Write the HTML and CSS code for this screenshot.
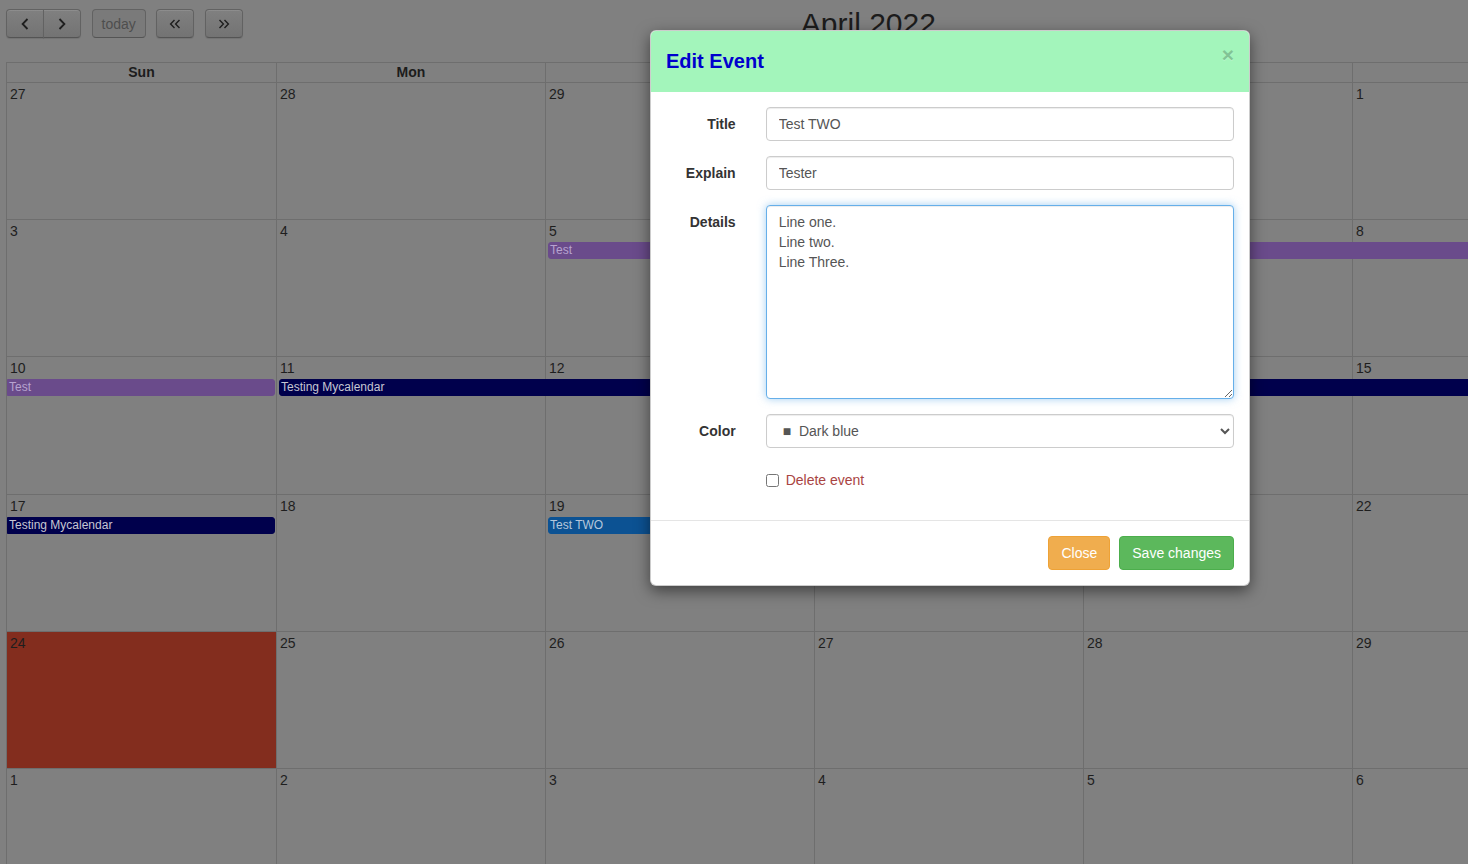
FILE: index.html
```html
<!DOCTYPE html>
<html lang="en">
<head>
<meta charset="utf-8">
<title>Calendar - Edit Event</title>
<link rel="stylesheet" href="styles.css">
</head>
<body>
<div class="calendar">
  <div class="toolbar">
    <div class="tb-left">
      <div class="btn-group">
        <button class="fc-btn icon-btn first" type="button" aria-label="prev">
          <svg width="8" height="12" viewBox="0 0 8 12"><path d="M6.5 1 L1.6 6 L6.5 11" fill="none" stroke="#1e1e1e" stroke-width="1.8"/></svg>
        </button>
        <button class="fc-btn icon-btn last" type="button" aria-label="next">
          <svg width="8" height="12" viewBox="0 0 8 12"><path d="M1.5 1 L6.4 6 L1.5 11" fill="none" stroke="#1e1e1e" stroke-width="1.8"/></svg>
        </button>
      </div>
      <button class="fc-btn disabled" type="button">today</button>
      <button class="fc-btn icon-btn" type="button" aria-label="prev year">
        <svg width="12" height="10" viewBox="0 0 12 10"><path d="M5.5 1 L1.6 5 L5.5 9 M10.5 1 L6.6 5 L10.5 9" fill="none" stroke="#1e1e1e" stroke-width="1.4"/></svg>
      </button>
      <button class="fc-btn icon-btn" type="button" aria-label="next year">
        <svg width="12" height="10" viewBox="0 0 12 10"><path d="M1.5 1 L5.4 5 L1.5 9 M6.5 1 L10.4 5 L6.5 9" fill="none" stroke="#1e1e1e" stroke-width="1.4"/></svg>
      </button>
    </div>
    <h2 class="title">April 2022</h2>
    <div class="tb-right"></div>
  </div>

  <div class="month">
    <div class="dow">
      <div>Sun</div><div>Mon</div><div>Tue</div><div>Wed</div><div>Thu</div><div>Fri</div><div>Sat</div>
    </div>

    <div class="week">
      <div class="day"><span class="num">27</span></div>
      <div class="day"><span class="num">28</span></div>
      <div class="day"><span class="num">29</span></div>
      <div class="day"><span class="num">30</span></div>
      <div class="day"><span class="num">31</span></div>
      <div class="day"><span class="num">1</span></div>
      <div class="day"><span class="num">2</span></div>
    </div>

    <div class="week">
      <div class="day"><span class="num">3</span></div>
      <div class="day"><span class="num">4</span></div>
      <div class="day"><span class="num">5</span></div>
      <div class="day"><span class="num">6</span></div>
      <div class="day"><span class="num">7</span></div>
      <div class="day"><span class="num">8</span></div>
      <div class="day"><span class="num">9</span></div>
      <div class="ev purple start col-3 span-5">Test</div>
    </div>

    <div class="week">
      <div class="day"><span class="num">10</span></div>
      <div class="day"><span class="num">11</span></div>
      <div class="day"><span class="num">12</span></div>
      <div class="day"><span class="num">13</span></div>
      <div class="day"><span class="num">14</span></div>
      <div class="day"><span class="num">15</span></div>
      <div class="day"><span class="num">16</span></div>
      <div class="ev purple end col-1 span-1">Test</div>
      <div class="ev navy start col-2 span-6">Testing Mycalendar</div>
    </div>

    <div class="week">
      <div class="day"><span class="num">17</span></div>
      <div class="day"><span class="num">18</span></div>
      <div class="day"><span class="num">19</span></div>
      <div class="day"><span class="num">20</span></div>
      <div class="day"><span class="num">21</span></div>
      <div class="day"><span class="num">22</span></div>
      <div class="day"><span class="num">23</span></div>
      <div class="ev navy end col-1 span-1">Testing Mycalendar</div>
      <div class="ev blue start end col-3 span-1">Test TWO</div>
    </div>

    <div class="week">
      <div class="day today"><span class="num">24</span></div>
      <div class="day"><span class="num">25</span></div>
      <div class="day"><span class="num">26</span></div>
      <div class="day"><span class="num">27</span></div>
      <div class="day"><span class="num">28</span></div>
      <div class="day"><span class="num">29</span></div>
      <div class="day"><span class="num">30</span></div>
    </div>

    <div class="week">
      <div class="day"><span class="num">1</span></div>
      <div class="day"><span class="num">2</span></div>
      <div class="day"><span class="num">3</span></div>
      <div class="day"><span class="num">4</span></div>
      <div class="day"><span class="num">5</span></div>
      <div class="day"><span class="num">6</span></div>
      <div class="day"><span class="num">7</span></div>
    </div>
  </div>
</div>

<div class="modal" role="dialog" aria-labelledby="modal-title">
  <div class="modal-header">
    <button class="close" type="button" aria-label="Close">&times;</button>
    <h4 class="modal-title" id="modal-title">Edit Event</h4>
  </div>
  <form class="modal-body">
    <div class="form-group">
      <label class="control-label" for="f-title">Title</label>
      <div class="field"><input class="form-control" id="f-title" type="text" value="Test TWO"></div>
    </div>
    <div class="form-group">
      <label class="control-label" for="f-explain">Explain</label>
      <div class="field"><input class="form-control" id="f-explain" type="text" value="Tester"></div>
    </div>
    <div class="form-group">
      <label class="control-label" for="f-details">Details</label>
      <div class="field"><textarea class="form-control details focused" id="f-details">Line one.
Line two.
Line Three.</textarea></div>
    </div>
    <div class="form-group">
      <label class="control-label" for="f-color">Color</label>
      <div class="field">
        <select class="form-control" id="f-color">
          <option>&#9632;&nbsp; Dark blue</option>
        </select>
      </div>
    </div>
    <div class="form-group">
      <span class="control-label"></span>
      <div class="field checkbox">
        <label class="text-danger"><input type="checkbox"> Delete event</label>
      </div>
    </div>
  </form>
  <div class="modal-footer">
    <button class="btn btn-warning" type="button">Close</button>
    <button class="btn btn-success" type="button">Save changes</button>
  </div>
</div>
</body>
</html>
```

FILE: styles.css
```css
html, body {
  margin: 0;
  padding: 0;
  overflow: hidden;
  height: 100%;
}

body {
  background: #808080;
  font-family: "Liberation Sans", Arial, sans-serif;
  font-size: 14px;
  color: #1e1e1e;
}

/* ---------- calendar ---------- */
.calendar {
  width: 1885px;
  margin: 9px 0 0 6px;
}

.toolbar {
  display: grid;
  grid-template-columns: auto 1fr 397px;
  height: 29px;
  margin-bottom: 24px;
}

.tb-left {
  display: flex;
  gap: 10.5px;
}

.btn-group {
  display: flex;
}

.fc-btn {
  height: 29px;
  padding: 0 9px;
  border: 1px solid #626262;
  border-bottom-color: #545454;
  border-radius: 4px;
  background: linear-gradient(to bottom, #808080, #737373);
  box-shadow: inset 0 1px 0 rgba(255, 255, 255, 0.1), 0 1px 1px rgba(0, 0, 0, 0.1);
  font-family: inherit;
  font-size: 14px;
  color: #1e1e1e;
  display: flex;
  align-items: center;
  justify-content: center;
}

.icon-btn {
  width: 38px;
}

.fc-btn.first {
  border-radius: 4px 0 0 4px;
}

.fc-btn.last {
  border-radius: 0 4px 4px 0;
  margin-left: -1px;
}

.fc-btn.disabled {
  color: #4e4e4e;
  background: #7a7a7a;
  box-shadow: none;
}

.title {
  margin: 0;
  font-size: 30px;
  font-weight: normal;
  line-height: 29px;
  text-align: center;
  color: #1c1c1c;
}

.month {
  border-top: 1px solid #6e6e6e;
  border-left: 1px solid #6e6e6e;
}

.dow,
.week {
  display: grid;
  grid-template-columns: 270px repeat(6, 269px);
}

.dow > div {
  height: 20px;
  box-sizing: border-box;
  border-right: 1px solid #6e6e6e;
  border-bottom: 1px solid #6e6e6e;
  text-align: center;
  font-weight: bold;
  line-height: 19px;
  color: #1c1c1c;
}

.week {
  grid-template-rows: 21px auto 1fr;
  height: 137.2px;
  box-sizing: border-box;
  border-bottom: 1px solid #6e6e6e;
}

.day {
  grid-row: 1 / 4;
  border-right: 1px solid #6e6e6e;
  min-width: 0;
}

.day:nth-child(1) { grid-column: 1; }
.day:nth-child(2) { grid-column: 2; }
.day:nth-child(3) { grid-column: 3; }
.day:nth-child(4) { grid-column: 4; }
.day:nth-child(5) { grid-column: 5; }
.day:nth-child(6) { grid-column: 6; }
.day:nth-child(7) { grid-column: 7; }

.day.today {
  background: #832d1e;
}

.num {
  display: block;
  padding: 2px 3px;
  line-height: 18px;
  color: #1e1e1e;
}

.ev {
  grid-row: 2;
  margin: 1px 0 0 0;
  padding: 0 1px;
  border: 1px solid transparent;
  font-size: 12px;
  line-height: 15px;
  white-space: nowrap;
  overflow: hidden;
  min-width: 0;
}

.ev.start {
  margin-left: 2px;
  border-top-left-radius: 3px;
  border-bottom-left-radius: 3px;
}

.ev.end {
  margin-right: 2px;
  border-top-right-radius: 3px;
  border-bottom-right-radius: 3px;
}

.ev.purple {
  background: #6a4b8b;
  border-color: #6a4b8b;
  color: #b7a3cf;
}

.ev.navy {
  background: #00004c;
  border-color: #00004c;
  color: #c6c6d2;
}

.ev.blue {
  background: #0c5293;
  border-color: #0c5293;
  color: #b5c7dc;
}

.col-1 { grid-column-start: 1; }
.col-2 { grid-column-start: 2; }
.col-3 { grid-column-start: 3; }
.span-1 { grid-column-end: span 1; }
.span-5 { grid-column-end: span 5; }
.span-6 { grid-column-end: span 6; }

/* ---------- modal ---------- */
.modal {
  position: absolute;
  top: 30px;
  left: 650px;
  width: 600px;
  box-sizing: border-box;
  background: #fff;
  border: 1px solid rgba(0, 0, 0, 0.2);
  border-radius: 6px;
  box-shadow: 0 5px 15px rgba(0, 0, 0, 0.5);
  overflow: hidden;
  color: #333;
}

.modal-header {
  background: #a3f5bb;
  padding: 15px;
  border-bottom: 1px solid #a3f5bb;
}

.modal-title {
  margin: 0;
  font-size: 20px;
  line-height: 30px;
  font-weight: bold;
  color: #0000cd;
}

.close {
  float: right;
  margin-top: -2px;
  padding: 0;
  border: 0;
  background: transparent;
  font-family: inherit;
  font-size: 21px;
  font-weight: bold;
  line-height: 1;
  color: #000;
  opacity: 0.2;
  text-shadow: 0 1px 0 #fff;
}

.modal-body {
  padding: 15px;
  margin: 0;
}

.form-group {
  display: grid;
  grid-template-columns: 69.67px 1fr;
  column-gap: 30px;
  margin-bottom: 15px;
}

.control-label {
  padding-top: 7px;
  text-align: right;
  font-weight: bold;
  line-height: 20px;
  color: #333;
}

.form-control {
  display: block;
  width: 100%;
  height: 34px;
  box-sizing: border-box;
  margin: 0;
  padding: 6px 12px;
  font-family: inherit;
  font-size: 14px;
  line-height: 20px;
  color: #555;
  background: #fff;
  border: 1px solid #ccc;
  border-radius: 4px;
  box-shadow: inset 0 1px 1px rgba(0, 0, 0, 0.075);
}

.form-control.details {
  height: 194px;
  resize: vertical;
}

.form-control.focused,
.form-control:focus {
  border-color: #66afe9;
  outline: 0;
  box-shadow: inset 0 1px 1px rgba(0, 0, 0, 0.075), 0 0 8px rgba(102, 175, 233, 0.6);
}

.checkbox {
  padding-top: 7px;
  min-height: 27px;
  box-sizing: border-box;
}

.checkbox label {
  display: flex;
  align-items: center;
  gap: 7px;
  line-height: 20px;
}

.checkbox input {
  margin: 0;
  width: 13px;
  height: 13px;
}

.text-danger {
  color: #a94442;
}

.modal-footer {
  padding: 15px;
  border-top: 1px solid #e5e5e5;
  display: flex;
  justify-content: flex-end;
  gap: 9px;
}

.btn {
  height: 34px;
  padding: 6px 12px;
  border: 1px solid transparent;
  border-radius: 4px;
  font-family: inherit;
  font-size: 14px;
  line-height: 20px;
  color: #fff;
}

.btn-warning {
  background: #f0ad4e;
  border-color: #eea236;
}

.btn-success {
  background: #5cb85c;
  border-color: #4cae4c;
}
```
